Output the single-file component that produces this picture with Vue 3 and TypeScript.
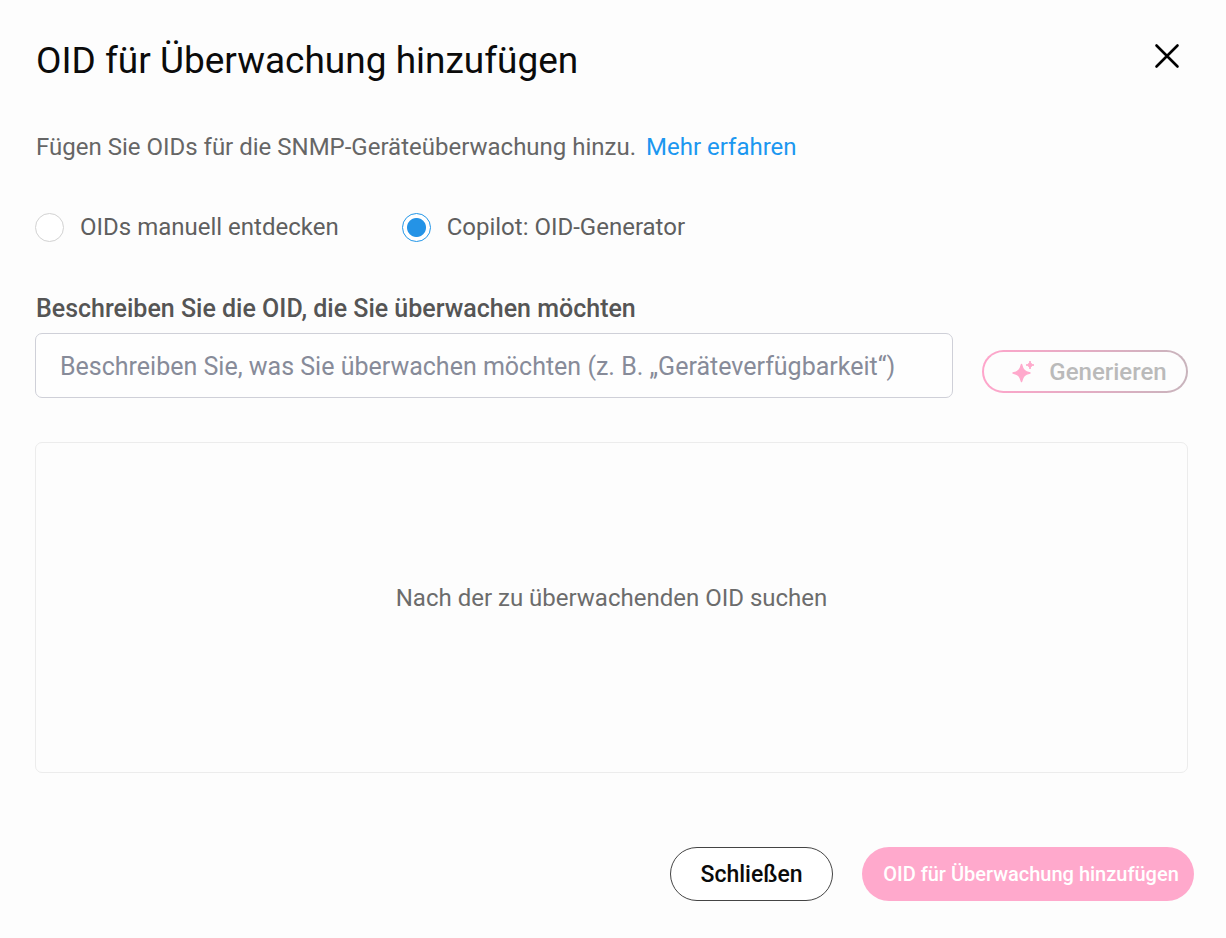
<script setup lang="ts">
import { ref } from 'vue'

type Mode = 'manual' | 'copilot'

const modes: { value: Mode; label: string }[] = [
  { value: 'manual', label: 'OIDs manuell entdecken' },
  { value: 'copilot', label: 'Copilot: OID-Generator' },
]
const mode = ref<Mode>('copilot')
const prompt = ref('')
</script>

<template>
  <main class="dialog" role="dialog" aria-labelledby="dialog-title">
    <header class="header">
      <h1 id="dialog-title" class="title">OID für Überwachung hinzufügen</h1>
      <button class="close" type="button" aria-label="Schließen">
        <svg width="26" height="26" viewBox="0 0 26 26" aria-hidden="true">
          <path d="M2.500 2.500 L23.500 23.500 M23.500 2.500 L2.500 23.500" fill="none" stroke="#000" stroke-width="2.600" stroke-linecap="round" />
        </svg>
      </button>
    </header>

    <div class="body">
      <p class="intro">
        <span>Fügen Sie OIDs für die SNMP-Geräteüberwachung hinzu.</span>
        <a class="link" href="#">Mehr erfahren</a>
      </p>

      <div class="modes" role="radiogroup" aria-labelledby="dialog-title">
        <label v-for="m in modes" :key="m.value" class="mode">
          <input v-model="mode" class="radio" type="radio" name="mode" :value="m.value" />
          <span>{{ m.label }}</span>
        </label>
      </div>

      <label class="field-label" for="oid-prompt">Beschreiben Sie die OID, die Sie überwachen möchten</label>
      <div class="prompt-row">
        <input
          id="oid-prompt"
          v-model="prompt"
          class="prompt"
          type="text"
          placeholder="Beschreiben Sie, was Sie überwachen möchten (z. B. „Geräteverfügbarkeit“)"
        />
        <button class="generate" type="button" disabled>
          <svg width="24" height="24" viewBox="0 0 24 24" aria-hidden="true">
            <g fill="#ffa9cc" stroke="#ffa9cc" stroke-linejoin="round">
              <path d="M10.500 4.500 C11.800 10 13.500 11.700 19 13 C13.500 14.300 11.800 16 10.500 21.500 C9.200 16 7.500 14.300 2 13 C7.500 11.700 9.200 10 10.500 4.500 Z" stroke-width="1.400" />
              <path d="M19 1 C19.700 3.600 20.400 4.300 23 5 C20.400 5.700 19.700 6.400 19 9 C18.300 6.400 17.600 5.700 15 5 C17.600 4.300 18.300 3.600 19 1 Z" stroke-width="1" />
            </g>
          </svg>
          <span>Generieren</span>
        </button>
      </div>

      <section class="results">
        <p class="empty">Nach der zu überwachenden OID suchen</p>
      </section>
    </div>

    <footer class="footer">
      <button class="cancel" type="button">Schließen</button>
      <button class="submit" type="button" disabled>OID für Überwachung hinzufügen</button>
    </footer>
  </main>
</template>

<style>
body {
  margin: 0;
  background: #fdfdfd;
}
</style>

<style scoped>
.dialog {
  box-sizing: border-box;
  min-height: 100vh;
  padding-top: 37px;
  background: #fdfdfd;
  color: #5f5f5f;
  font-family: Roboto, "Liberation Sans", sans-serif;
  font-size: 24px;
  line-height: 32px;
}

button,
input {
  box-sizing: border-box;
  margin: 0;
  font-family: inherit;
}

.header {
  display: flex;
  justify-content: space-between;
  align-items: flex-start;
  padding: 0 42px 0 36px;
}

.title {
  margin: 0;
  color: #0b0b0b;
  font-size: 37px;
  font-weight: 400;
  line-height: 48px;
}

.close {
  display: flex;
  padding: 4px;
  margin-top: 2px;
  border: 0;
  background: none;
}

.body {
  padding: 0 38px 0 35px;
}

.intro {
  display: flex;
  flex-wrap: wrap;
  gap: 10px;
  margin: 46px 0 0 1px;
  color: #666;
}

.link {
  color: #1b97f0;
  text-decoration: none;
}

.modes {
  display: flex;
  flex-wrap: wrap;
  gap: 63px;
  margin-top: 48px;
}

.mode {
  display: flex;
  align-items: center;
  gap: 16px;
}

.radio {
  width: 29px;
  height: 29px;
  flex: none;
  appearance: none;
  border: 1px solid #d2d2d2;
  border-radius: 50%;
  background: #fff;
}

.radio:checked {
  border-color: #2196e8;
  background: radial-gradient(circle, #2493e6 9px, #fff 10px);
}

.field-label {
  display: block;
  margin: 50px 0 8px 1px;
  color: #555;
  font-size: 25px;
  font-weight: 500;
}

.prompt-row {
  display: flex;
  gap: 29px;
}

.prompt {
  min-width: 0;
  flex: 1;
  height: 65px;
  padding: 2px 24px 0;
  border: 1px solid #cfd0d8;
  border-radius: 7px;
  background: #fefefe;
  color: #555;
  font-size: 25px;
}

.prompt::placeholder {
  color: #878b99;
  opacity: 1;
}

.generate {
  display: flex;
  align-items: center;
  justify-content: center;
  gap: 14px;
  align-self: flex-end;
  width: 206px;
  height: 43px;
  margin-bottom: 5px;
  padding: 0 0 0 8px;
  border: 2px solid transparent;
  border-radius: 22px;
  background:
    linear-gradient(#fdfdfd, #fdfdfd) padding-box,
    linear-gradient(90deg, #ffa5cb, #c8b4bc) border-box;
  color: #bababa;
  font-size: 24px;
  font-weight: 500;
}

.results {
  display: flex;
  align-items: center;
  justify-content: center;
  box-sizing: border-box;
  min-height: 331px;
  margin-top: 44px;
  border: 1px solid #ececec;
  border-radius: 7px;
}

.empty {
  margin: 0 0 20px;
  color: #6c6c6c;
}

.footer {
  display: flex;
  justify-content: flex-end;
  gap: 29px;
  padding: 74px 32px 36px;
}

.cancel,
.submit {
  height: 54px;
  border-radius: 27px;
  font-weight: 500;
}

.cancel {
  width: 163px;
  border: 1px solid #444;
  background: #fff;
  color: #0a0a0a;
  font-size: 23px;
}

.submit {
  width: 332px;
  padding: 0 0 0 6px;
  border: 0;
  background: #ffa9cc;
  color: #fff;
  font-size: 20px;
}
</style>
